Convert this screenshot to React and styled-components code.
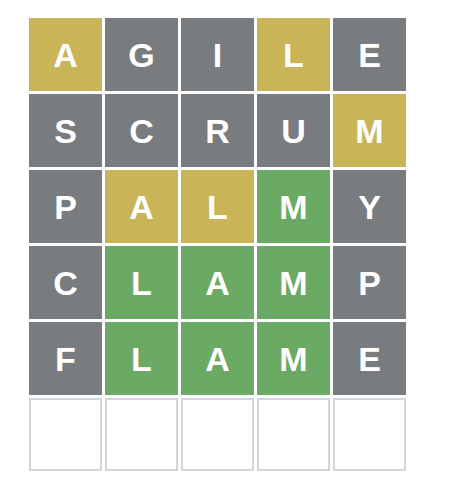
import React from "react";
import styled, { createGlobalStyle } from "styled-components";

const GlobalStyle = createGlobalStyle`
  body {
    margin: 0;
    background: #ffffff;
    font-family: "Liberation Sans", Arial, sans-serif;
  }
`;

const COLORS = {
  correct: "#6aaa64",
  present: "#c9b458",
  absent: "#787c7e",
};

const Board = styled.div`
  display: grid;
  grid-template-columns: repeat(5, 73px);
  grid-auto-rows: 73px;
  gap: 3px;
  padding: 18px 0 0 29px;
`;

const Tile = styled.div`
  box-sizing: border-box;
  display: flex;
  align-items: center;
  justify-content: center;
  background: ${({ $state }) => ($state ? COLORS[$state] : "#ffffff")};
  border: ${({ $state }) => ($state ? "none" : "2px solid #d3d6da")};
  color: #ffffff;
  font-size: 34px;
  font-weight: bold;
  text-transform: uppercase;
  line-height: 1;
`;

const rows = [
  ["agile", "paapa".split("")],
  ["scrum", "aaaap".split("")],
  ["palmy", "appca".split("")],
  ["clamp", "accca".split("")],
  ["flame", "accca".split("")],
];

const stateOf = { c: "correct", p: "present", a: "absent" };

const App = () => {
  return (
    <>
      <GlobalStyle />
      <Board>
        {rows.map(([word, marks]) =>
          word.split("").map((ch, i) => (
            <Tile key={word + i} $state={stateOf[marks[i]]}>
              {ch}
            </Tile>
          ))
        )}
        {Array.from({ length: 5 }).map((_, i) => (
          <Tile key={"empty" + i} />
        ))}
      </Board>
    </>
  );
};

export default App;
